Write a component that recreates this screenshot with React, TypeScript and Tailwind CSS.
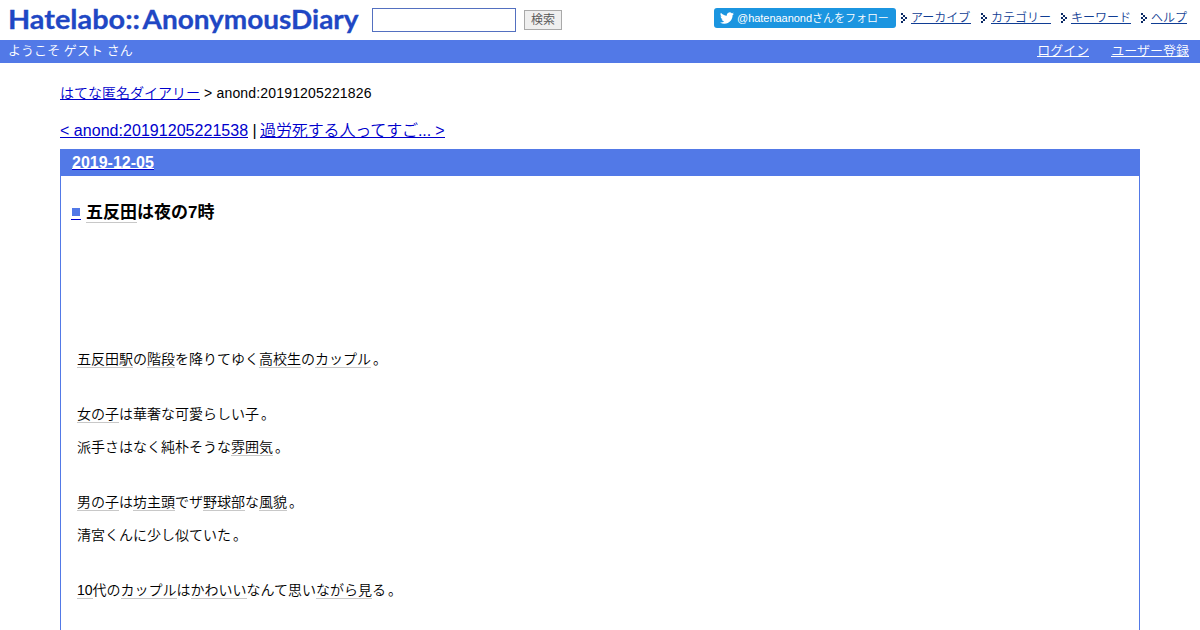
import type { ReactNode } from 'react';

const menu = ['アーカイブ', 'カテゴリー', 'キーワード', 'ヘルプ'];

// dotted chevron in front of each menu item
const dots = [[0, 0], [2, 2], [0, 4], [4, 4], [2, 6], [0, 8]];

function Bullet() {
  return (
    <svg className="mt-[3px] mr-[4px] h-[10px] w-[6px] shrink-0" viewBox="0 0 6 10" shapeRendering="crispEdges">
      {dots.map(([x, y]) => (
        <rect key={`${x}-${y}`} x={x} y={y} width="2" height="2" fill="#0a2a66" />
      ))}
    </svg>
  );
}

function Kw({ children }: { children: ReactNode }) {
  return <a className="inline-block h-[19px] border-b border-[#c8c8c8] align-top leading-[20px]">{children}</a>;
}

function Line({ children, gap = false }: { children: ReactNode; gap?: boolean }) {
  return (
    <p className={gap ? 'mt-[33px] h-[22px]' : 'mt-[11px] h-[22px]'}>
      {children}
      <span className="pl-[2px]">。</span>
    </p>
  );
}

function Logo() {
  return (
    <svg className="h-[40px] w-[364px] shrink-0" viewBox="0 0 364 40">
      <g fill="#2047c4" fontFamily="Lato, sans-serif" fontWeight="700" fontSize="26.5" stroke="#2047c4" strokeWidth="0.3">
        <text x="8" y="29" textLength="132" lengthAdjust="spacingAndGlyphs">Hatelabo::</text>
        <text x="142.500" y="28.5" textLength="216" lengthAdjust="spacingAndGlyphs">AnonymousDiary</text>
      </g>
    </svg>
  );
}

export default function App() {
  return (
    <div className="h-[630px] overflow-hidden bg-white font-['Liberation_Sans','Noto_Sans_CJK_JP',sans-serif] font-[350] text-black">
      <header className="flex h-[40px] items-start">
        <Logo />
        <input className="ml-[8px] mt-[8px] h-[24px] w-[144px] border border-[#5370c0] bg-white" type="text" />
        <button className="ml-[8px] mt-[10px] h-[20px] w-[38px] border border-[#a9a9a9] bg-[#efefef] text-[12px] leading-[17px] text-[#555]">
          検索
        </button>
        <a className="ml-auto mt-[8px] flex h-[20px] w-[182px] items-center rounded-[3px] bg-[#1b95e0] pl-[6px] text-[11px] tracking-[-0.03px] whitespace-nowrap text-white">
          <svg className="mr-[3px] h-[14px] w-[14px]" viewBox="0 0 24 24" fill="#fff">
            <path d="M23.95 4.57a10 10 0 0 1-2.82.77 4.96 4.96 0 0 0 2.16-2.72c-.95.55-2 .95-3.13 1.18a4.92 4.92 0 0 0-8.38 4.48C7.69 8.1 4.07 6.13 1.64 3.16a4.92 4.92 0 0 0 1.52 6.57 4.9 4.9 0 0 1-2.23-.61v.06a4.92 4.92 0 0 0 3.95 4.83 5 5 0 0 1-2.21.08 4.94 4.94 0 0 0 4.6 3.42A9.87 9.87 0 0 1 0 19.54a14 14 0 0 0 7.55 2.21c9.05 0 14-7.5 14-13.98 0-.21 0-.42-.02-.63a9.94 9.94 0 0 0 2.42-2.57z" />
          </svg>
          @hatenaanondさんをフォロー
        </a>
        <nav className="ml-[5px] mr-[13px] mt-[10px] flex h-[16px] gap-[10px] text-[12px] leading-[17px] text-[#103d94]">
          {menu.map((m) => (
            <div key={m} className="flex items-start">
              <Bullet />
              <a className={`h-[14px] border-b border-[#103d94] ${m.length === 5 ? 'w-[60px]' : 'w-[36px]'}`}>{m}</a>
            </div>
          ))}
        </nav>
      </header>

      <div className="flex h-[23px] bg-[#5279e7] px-[8px] text-[13px] leading-[22px] text-white">
        <span className="tracking-[0.05px]">ようこそ ゲスト さん</span>
        <span className="ml-auto mr-[3px] flex gap-[22px]">
          <a className="h-[17px] border-b border-white">ログイン</a>
          <a className="h-[17px] border-b border-white">ユーザー登録</a>
        </span>
      </div>

      <main className="mx-[60px]">
        <div className="mt-[20px] flex h-[20px] text-[14px] leading-[20px]">
          <a className="h-[17px] border-b border-[#0000cc] text-[#0000cc]">はてな匿名ダイアリー</a>
          <span className="tracking-[0.17px] whitespace-pre"> &gt; anond:20191205221826</span>
        </div>
        <div className="mt-[17px] flex h-[22px] text-[16px] leading-[22px]">
          <a className="h-[18px] w-[188px] border-b border-[#0000cc] tracking-[0.04px] whitespace-nowrap text-[#0000cc]">
            &lt; anond:20191205221538
          </a>
          <span className="w-[12px] text-center whitespace-pre"> | </span>
          <a className="h-[18px] w-[185px] border-b border-[#0000cc] tracking-[-0.12px] whitespace-nowrap text-[#0000cc]">
            過労死する人ってすご... &gt;
          </a>
        </div>

        <section className="mt-[7px] h-[500px] border border-[#5279e7]">
          <h2 className="flex h-[26px] bg-[#5279e7] pl-[11px] text-[16px] leading-[25px] font-bold text-white">
            <a className="h-[20px] border-b border-[#0000cc]">
              <span className="block h-[19px] border-b border-white">2019-12-05</span>
            </a>
          </h2>
          <h3 className="mt-[25px] ml-[10px] flex h-[24px] text-[17px] leading-[24px] font-bold">
            <a className="mr-[5px] h-[19px] w-[10px] border-b border-[#0000cc] pt-[7px]">
              <span className="ml-px block h-[8px] w-[8px] bg-[#5279e7]" />
            </a>
            <a className="h-[22px] border-b border-[#c8c8c8]">五反田</a>
            <span>は夜の7時</span>
          </h3>
          <div className="mt-[124px] ml-[16px] text-[14px] leading-[20px]">
            <Line>
              <Kw>五反田駅</Kw>の<Kw>階段</Kw>を降りてゆく<Kw>高校生</Kw>の<Kw>カップル</Kw>
            </Line>
            <Line gap><Kw>女の子</Kw>は華奢な可愛らしい子</Line>
            <Line>派手さはなく純朴そうな<Kw>雰囲気</Kw></Line>
            <Line gap>
              <Kw>男の子</Kw>は<Kw>坊主頭</Kw>でザ<Kw>野球部</Kw>な<Kw>風貌</Kw>
            </Line>
            <Line>清宮くんに少し似ていた</Line>
            <Line gap>
              <Kw>10</Kw>代の<Kw>カップル</Kw>は<Kw>かわいい</Kw>なんて思い<Kw>ながら</Kw><Kw>見</Kw>る
            </Line>
          </div>
        </section>
      </main>
    </div>
  );
}
